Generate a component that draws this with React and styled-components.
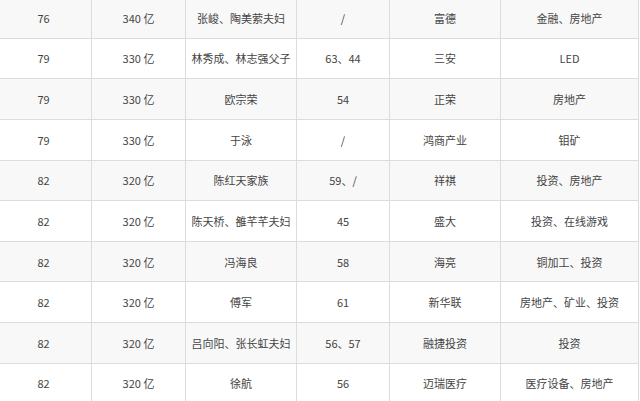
import styled, { createGlobalStyle } from 'styled-components';

const GlobalStyle = createGlobalStyle`
  html, body {
    margin: 0;
    padding: 0;
    background: #fff;
  }
  body {
    width: 640px;
    height: 401px;
    overflow: hidden;
    font-family: "Noto Sans CJK SC", "Microsoft YaHei", sans-serif;
  }
`;

const rows = [
  ['76', '340 亿', '张峻、陶美萦夫妇', '/', '富德', '金融、房地产'],
  ['79', '330 亿', '林秀成、林志强父子', '63、44', '三安', 'LED'],
  ['79', '330 亿', '欧宗荣', '54', '正荣', '房地产'],
  ['79', '330 亿', '于泳', '/', '鸿商产业', '钼矿'],
  ['82', '320 亿', '陈红天家族', '59、/', '祥祺', '投资、房地产'],
  ['82', '320 亿', '陈天桥、雒芊芊夫妇', '45', '盛大', '投资、在线游戏'],
  ['82', '320 亿', '冯海良', '58', '海亮', '铜加工、投资'],
  ['82', '320 亿', '傅军', '61', '新华联', '房地产、矿业、投资'],
  ['82', '320 亿', '吕向阳、张长虹夫妇', '56、57', '融捷投资', '投资'],
  ['82', '320 亿', '徐航', '56', '迈瑞医疗', '医疗设备、房地产'],
];

const widths = [96, 94, 111, 93, 111, 138];

export default function App() {
  return (
    <>
      <GlobalStyle />
      <Frame>
        <Table>
          <colgroup>
            {widths.map((w, i) => (
              <col key={i} style={{ width: w }} />
            ))}
          </colgroup>
          <tbody>
            {rows.map((r, i) => (
              <Row key={i} $shaded={i % 2 === 0}>
                {r.map((c, j) => (
                  <Cell key={j}>{c}</Cell>
                ))}
              </Row>
            ))}
          </tbody>
        </Table>
      </Frame>
    </>
  );
}

const Frame = styled.div`
  width: 640px;
  height: 401px;
  overflow: hidden;
`;

const Table = styled.table`
  border-collapse: collapse;
  table-layout: fixed;
  width: 643px;
  margin: -3px 0 0 -5px;
`;

const Row = styled.tr`
  height: 40.625px;
  background: ${(p) => (p.$shaded ? '#f8f8f8' : '#fff')};
`;

const Cell = styled.td`
  border: 1px solid #dcdcdc;
  padding: 0;
  text-align: center;
  vertical-align: middle;
  font-size: 11px;
  color: #444;
  white-space: nowrap;
`;
